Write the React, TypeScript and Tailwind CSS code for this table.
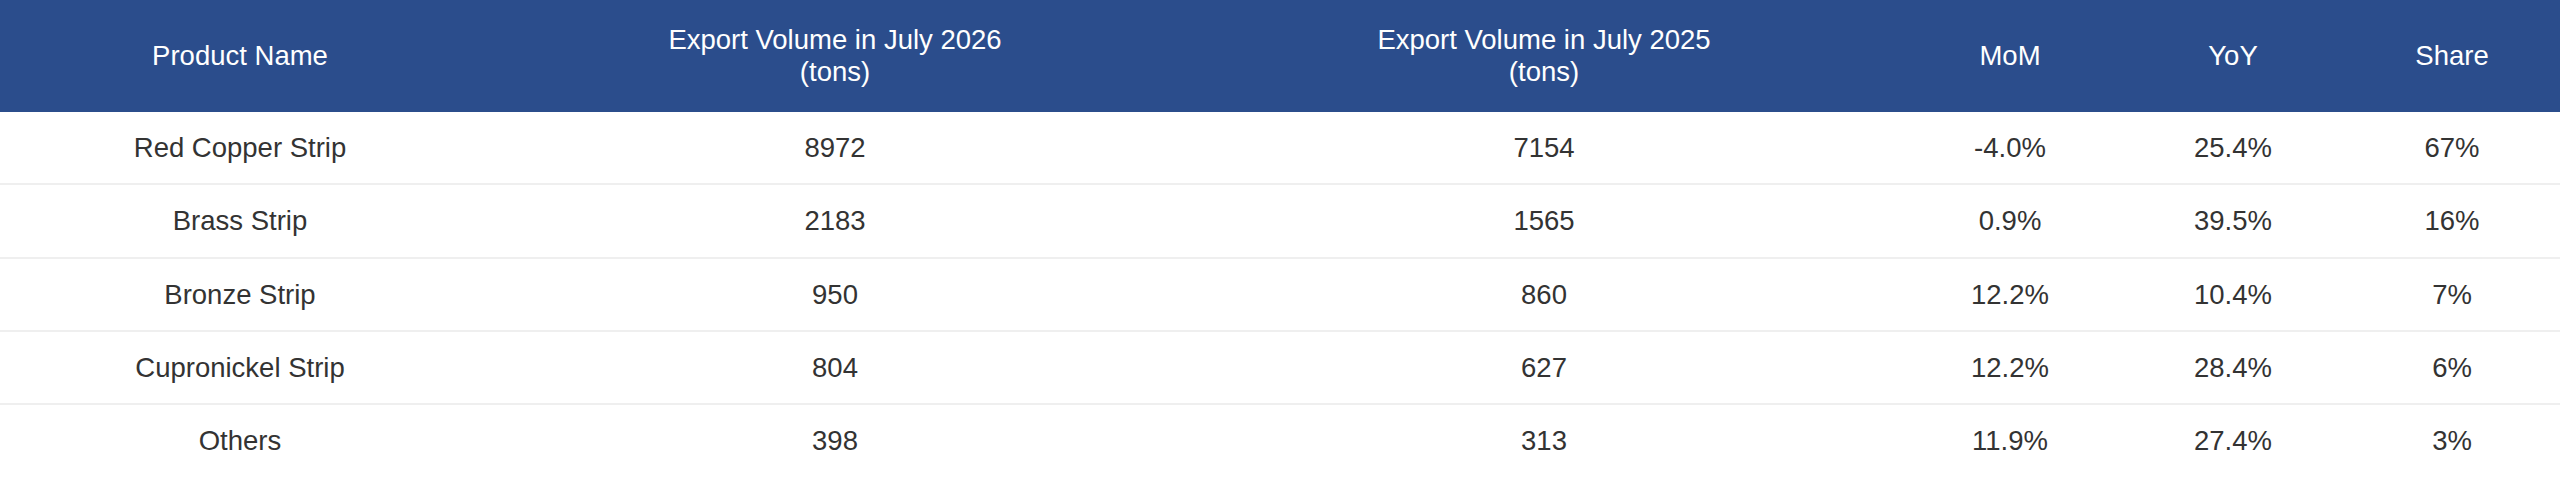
const columns = [
  'Product Name',
  'Export Volume in July 2026\n(tons)',
  'Export Volume in July 2025\n(tons)',
  'MoM',
  'YoY',
  'Share'
];

const rows = [
  ['Red Copper Strip', '8972', '7154', '-4.0%', '25.4%', '67%'],
  ['Brass Strip', '2183', '1565', '0.9%', '39.5%', '16%'],
  ['Bronze Strip', '950', '860', '12.2%', '10.4%', '7%'],
  ['Cupronickel Strip', '804', '627', '12.2%', '28.4%', '6%'],
  ['Others', '398', '313', '11.9%', '27.4%', '3%']
];

const gridCols = 'grid grid-cols-[480px_710px_708px_224px_222px_216px]';

export default function App() {
  return (
    <div className="w-[2560px] bg-white font-['Liberation_Sans',Arial,sans-serif] text-[27.5px]">
      {/* Header */}
      <div className={`${gridCols} h-[112px] bg-[#2b4d8c] text-white`}>
        {columns.map((col) => (
          <div
            key={col}
            className="flex items-center justify-center text-center leading-[31.6px] whitespace-pre-line"
          >
            {col}
          </div>
        ))}
      </div>

      {/* Body */}
      {rows.map((row, i) => (
        <div
          key={row[0]}
          className={`${gridCols} h-[71.33px] box-content text-[#333333] ${
            i < rows.length - 1 ? 'border-b-2 border-[#efefef]' : ''
          }`}
        >
          {row.map((cell, j) => (
            <div
              key={j}
              className="flex items-center justify-center text-center leading-[31.6px]"
            >
              {cell}
            </div>
          ))}
        </div>
      ))}
    </div>
  );
}
